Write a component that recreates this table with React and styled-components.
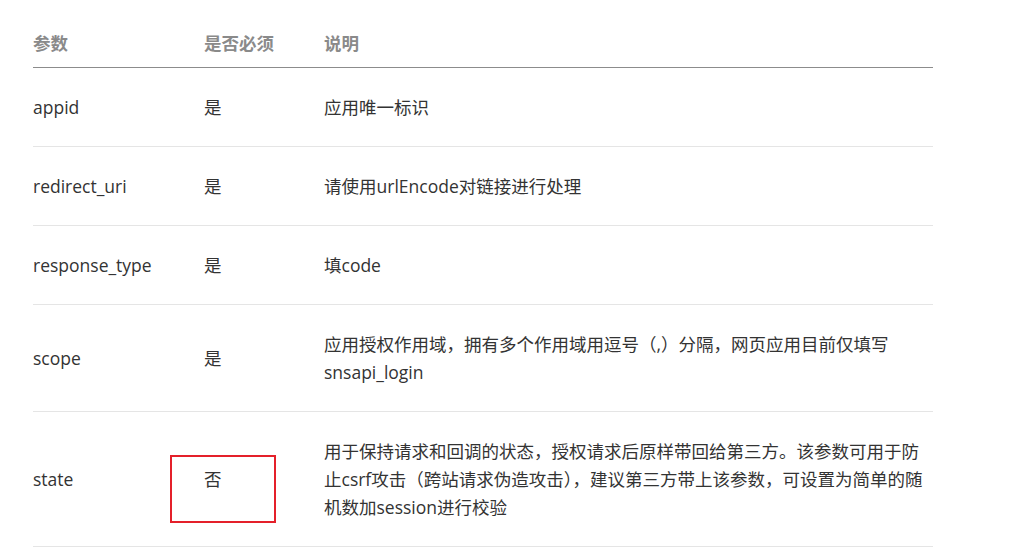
import React from "react";
import styled, { createGlobalStyle } from "styled-components";

const Global = createGlobalStyle`
  html, body { margin: 0; padding: 0; background: #fff; }
  body { font-family: "Open Sans", "Noto Sans CJK SC", sans-serif; }
`;

const Page = styled.div`
  position: relative;
  padding: 0 0 0 33px;
  width: 1025px;
  height: 549px;
  box-sizing: border-box;
  overflow: hidden;
`;

const Table = styled.table`
  width: 900px;
  border-collapse: collapse;
  table-layout: fixed;
  font-size: 17.5px;
  line-height: 28px;
  color: #333;
`;

const Th = styled.th`
  text-align: left;
  font-weight: bold;
  color: #8a8a8a;
  padding: 29px 0 10px;
  border-bottom: 1px solid #8c8c8c;
  vertical-align: middle;
`;

const Td = styled.td`
  padding: 25px 0;
  border-bottom: 1px solid #e5e5e5;
  vertical-align: middle;
  overflow-wrap: break-word;
`;

const Mark = styled.div`
  position: absolute;
  left: 170px;
  top: 455px;
  width: 106px;
  height: 68px;
  box-sizing: border-box;
  border: 2px solid #e4202a;
  pointer-events: none;
`;

const rows = [
  ["appid", "是", "应用唯一标识"],
  ["redirect_uri", "是", "请使用urlEncode对链接进行处理"],
  ["response_type", "是", "填code"],
  ["scope", "是", "应用授权作用域，拥有多个作用域用逗号（,）分隔，网页应用目前仅填写snsapi_login"],
  ["state", "否", "用于保持请求和回调的状态，授权请求后原样带回给第三方。该参数可用于防止csrf攻击（跨站请求伪造攻击），建议第三方带上该参数，可设置为简单的随机数加session进行校验"],
];

export default function App() {
  return (
    <Page>
      <Global />
      <Table>
        <colgroup>
          <col style={{ width: 171 }} />
          <col style={{ width: 120 }} />
          <col style={{ width: 609 }} />
        </colgroup>
        <thead>
          <tr>
            <Th>参数</Th>
            <Th>是否必须</Th>
            <Th>说明</Th>
          </tr>
        </thead>
        <tbody>
          {rows.map((r) => (
            <tr key={r[0]}>
              <Td>{r[0]}</Td>
              <Td>{r[1]}</Td>
              <Td>{r[2]}</Td>
            </tr>
          ))}
        </tbody>
      </Table>
      <Mark />
    </Page>
  );
}
